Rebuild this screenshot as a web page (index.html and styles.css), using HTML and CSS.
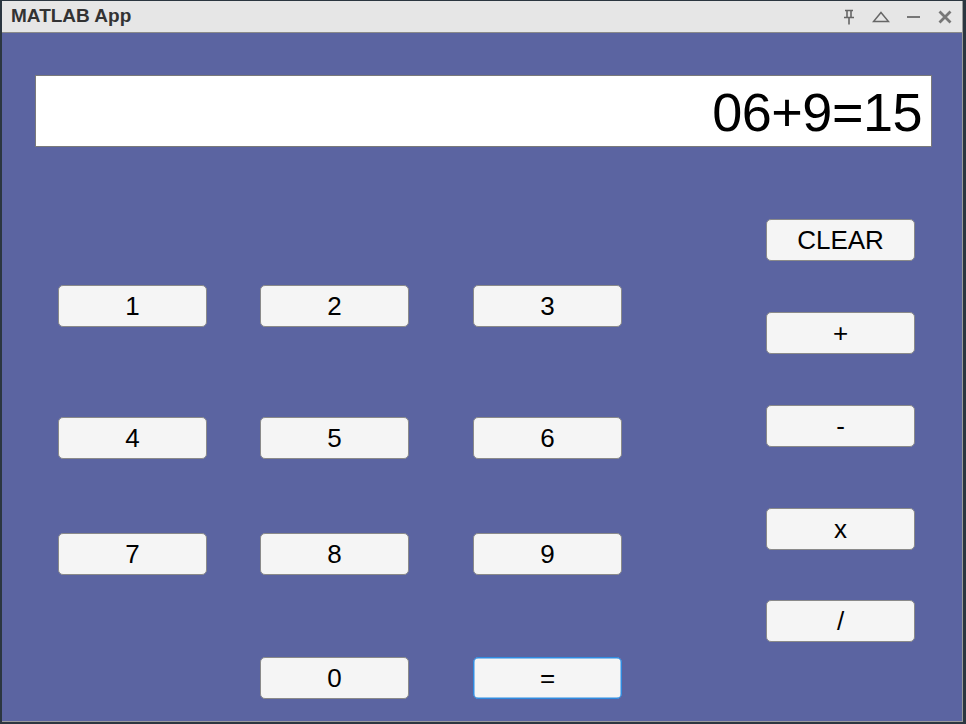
FILE: index.html
```html
<!DOCTYPE html>
<html>
<head>
<meta charset="utf-8">
<link rel="stylesheet" href="styles.css">
</head>
<body>
<div class="frame">
  <div class="window">
    <div class="titlebar">
      <span class="title">MATLAB App</span>
      <div class="controls">
        <svg class="ic pin" width="12" height="16" viewBox="0 0 12 16"><path d="M2 1.5h8M4 1.5v7M8 1.5v7M1 8.5h10M6 8.5v7" fill="none" stroke="#666" stroke-width="1.6"/></svg>
        <svg class="ic tri" width="18" height="12" viewBox="0 0 18 12"><path d="M9 1.5L16.5 10.5H1.5Z" fill="none" stroke="#666" stroke-width="1.5"/></svg>
        <svg class="ic min" width="13" height="4" viewBox="0 0 13 4"><path d="M0 2h13" stroke="#777" stroke-width="2"/></svg>
        <svg class="ic close" width="14" height="14" viewBox="0 0 14 14"><path d="M1.5 1.5L12.5 12.5M12.5 1.5L1.5 12.5" stroke="#777" stroke-width="2.8"/></svg>
      </div>
    </div>
    <div class="panel">
      <div class="display">06+9=15</div>
      <div class="pad">
        <div class="keys">
          <button class="btn">1</button>
          <button class="btn">2</button>
          <button class="btn">3</button>
          <button class="btn">4</button>
          <button class="btn">5</button>
          <button class="btn">6</button>
          <button class="btn">7</button>
          <button class="btn">8</button>
          <button class="btn">9</button>
          <span></span>
          <button class="btn">0</button>
          <button class="btn focused">=</button>
        </div>
        <div class="ops">
          <button class="btn">CLEAR</button>
          <button class="btn">+</button>
          <button class="btn">-</button>
          <button class="btn">x</button>
          <button class="btn">/</button>
        </div>
      </div>
    </div>
  </div>
</div>
</body>
</html>
```
FILE: styles.css
```css
html, body {
  margin: 0;
  padding: 0;
  background: #2e3a44;
}
.frame {
  width: 966px;
  height: 724px;
  box-sizing: border-box;
  padding: 1px 3px 2px 2px;
  background: #2b3640;
}
.window {
  height: 100%;
  display: flex;
  flex-direction: column;
  box-sizing: border-box;
  border-right: 1px solid #9a9a9a;
  border-bottom: 1px solid #9a9a9a;
}
.titlebar {
  height: 32px;
  flex: none;
  background: #e6e6e6;
  border-bottom: 1px solid #8a8a8a;
  display: flex;
  align-items: center;
  justify-content: space-between;
  box-sizing: border-box;
}
.title {
  font-family: "Liberation Sans", Arial, sans-serif;
  font-weight: bold;
  font-size: 19px;
  color: #333;
  margin-left: 9px;
  margin-top: -1px;
}
.controls {
  display: flex;
  align-items: center;
  margin-right: 10px;
}
.ic { display: block; }
.pin { margin-right: 17px; }
.tri { margin-right: 17px; }
.min { margin-right: 18px; }
.panel {
  flex: 1;
  background: #5b64a1;
  padding: 42px 0 0 33px;
}
.display {
  width: 897px;
  height: 72px;
  box-sizing: border-box;
  background: #fff;
  border: 1px solid #7a7a7a;
  font-family: "Liberation Sans", Arial, sans-serif;
  font-size: 54px;
  letter-spacing: -0.5px;
  line-height: 72px;
  text-align: right;
  padding-right: 9px;
  color: #000;
}
.pad {
  display: flex;
  align-items: flex-start;
  margin-top: 72px;
}
.keys {
  display: grid;
  grid-template-columns: 202px 213px 149px;
  grid-template-rows: 132px 116px 124px 42px;
  margin-left: 23px;
  margin-top: 66px;
}
.ops {
  display: grid;
  grid-template-rows: 93px 93px 103px 92px 42px;
  margin-left: 144px;
}
.btn {
  width: 149px;
  height: 42px;
  box-sizing: border-box;
  background: #f5f5f5;
  border: 1px solid #8a8a8a;
  border-radius: 5px;
  font-family: "Liberation Sans", Arial, sans-serif;
  font-size: 26px;
  color: #000;
  padding: 0;
  margin: 0;
}
.btn.focused {
  border: 1px solid #2f8be0;
  box-shadow: inset 0 0 0 0.5px #2f8be0;
}
```
